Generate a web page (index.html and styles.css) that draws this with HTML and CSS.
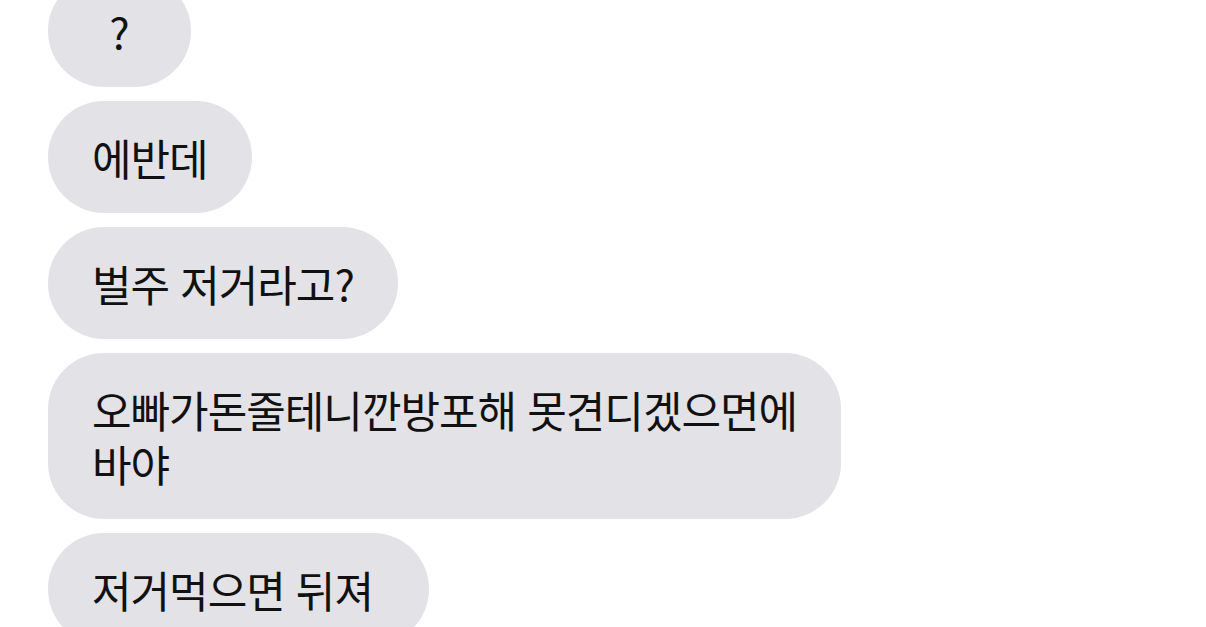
FILE: index.html
```html
<!DOCTYPE html>
<html lang="ko">
<head>
<meta charset="utf-8">
<title>Chat</title>
<link rel="stylesheet" href="styles.css">
</head>
<body>
<main class="thread">
  <div class="bubble bubble-short">?</div>
  <div class="bubble">에반데</div>
  <div class="bubble">벌주 저거라고?</div>
  <div class="bubble">오빠가돈줄테니깐방포해 못견디겠으면에<br>바야</div>
  <div class="bubble bubble-trail">저거먹으면 뒤져</div>
</main>
</body>
</html>
```
FILE: styles.css
```css
html, body {
  margin: 0;
  padding: 0;
  background: #ffffff;
  overflow: hidden;
}

.thread {
  display: flex;
  flex-direction: column;
  align-items: flex-start;
  gap: 14px;
  padding-left: 48px;
  margin-top: -25px;
}

.bubble {
  background: #e2e2e7;
  color: #111111;
  font-family: "Noto Sans CJK KR", "Noto Sans", sans-serif;
  font-size: 43px;
  font-weight: 400;
  letter-spacing: -1px;
  line-height: 54px;
  padding: 29px 44px;
  border-radius: 56px;
  white-space: nowrap;
}

.bubble-short {
  min-width: 55px;
  text-align: center;
  letter-spacing: 0;
}

.bubble-trail {
  padding-right: 56px;
}
```
